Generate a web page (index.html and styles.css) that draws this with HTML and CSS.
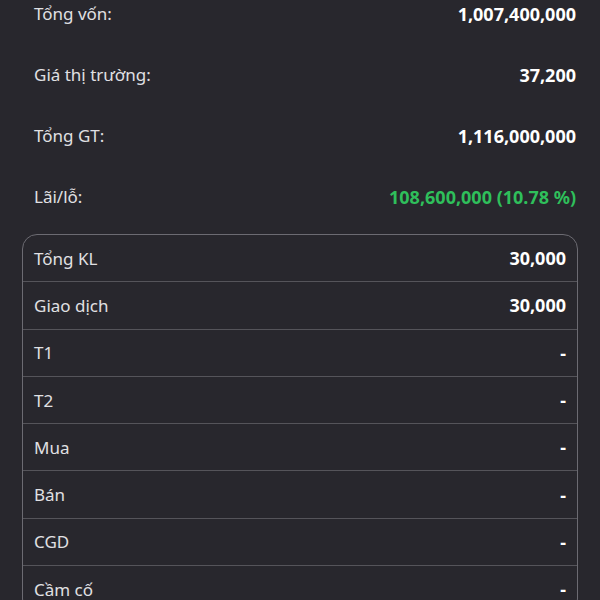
FILE: index.html
```html
<!DOCTYPE html>
<html lang="vi">
<head>
<meta charset="utf-8">
<link rel="stylesheet" href="styles.css">
</head>
<body>
<div class="summary">
  <div class="srow"><span class="label">Tổng vốn:</span><span class="value">1,007,400,000</span></div>
  <div class="srow"><span class="label">Giá thị trường:</span><span class="value">37,200</span></div>
  <div class="srow"><span class="label">Tổng GT:</span><span class="value">1,116,000,000</span></div>
  <div class="srow"><span class="label">Lãi/lỗ:</span><span class="value up">108,600,000 (10.78 %)</span></div>
</div>
<div class="table">
  <div class="trow"><span class="label">Tổng KL</span><span class="value">30,000</span></div>
  <div class="trow"><span class="label">Giao dịch</span><span class="value">30,000</span></div>
  <div class="trow"><span class="label">T1</span><span class="value">-</span></div>
  <div class="trow"><span class="label">T2</span><span class="value">-</span></div>
  <div class="trow"><span class="label">Mua</span><span class="value">-</span></div>
  <div class="trow"><span class="label">Bán</span><span class="value">-</span></div>
  <div class="trow"><span class="label">CGD</span><span class="value">-</span></div>
  <div class="trow"><span class="label">Cầm cố</span><span class="value">-</span></div>
</div>
</body>
</html>
```
FILE: styles.css
```css
html, body {
  margin: 0;
  padding: 0;
  background: #28272d;
  overflow: hidden;
}
body {
  font-family: "Noto Sans", "Open Sans", sans-serif;
  color: #e2e2e4;
  font-size: 18px;
  width: 600px;
  height: 600px;
}
.summary {
  margin-top: -17px;
  padding: 0 24px 0 34px;
}
.srow {
  height: 61px;
  display: flex;
  align-items: center;
  justify-content: space-between;
}
.label {
  color: #e0e0e3;
  font-size: 17px;
}
.value {
  font-weight: 700;
  color: #ffffff;
}
.value.up {
  color: #2fbf5b;
}
.table {
  margin: 7px 22px 0 22px;
  border: 1.5px solid #6c6b72;
  border-radius: 15px;
  overflow: hidden;
}
.trow {
  height: 46.3px;
  display: flex;
  align-items: center;
  justify-content: space-between;
  padding: 0 11px 0 11px;
  border-bottom: 1.5px solid #55545a;
}
```
